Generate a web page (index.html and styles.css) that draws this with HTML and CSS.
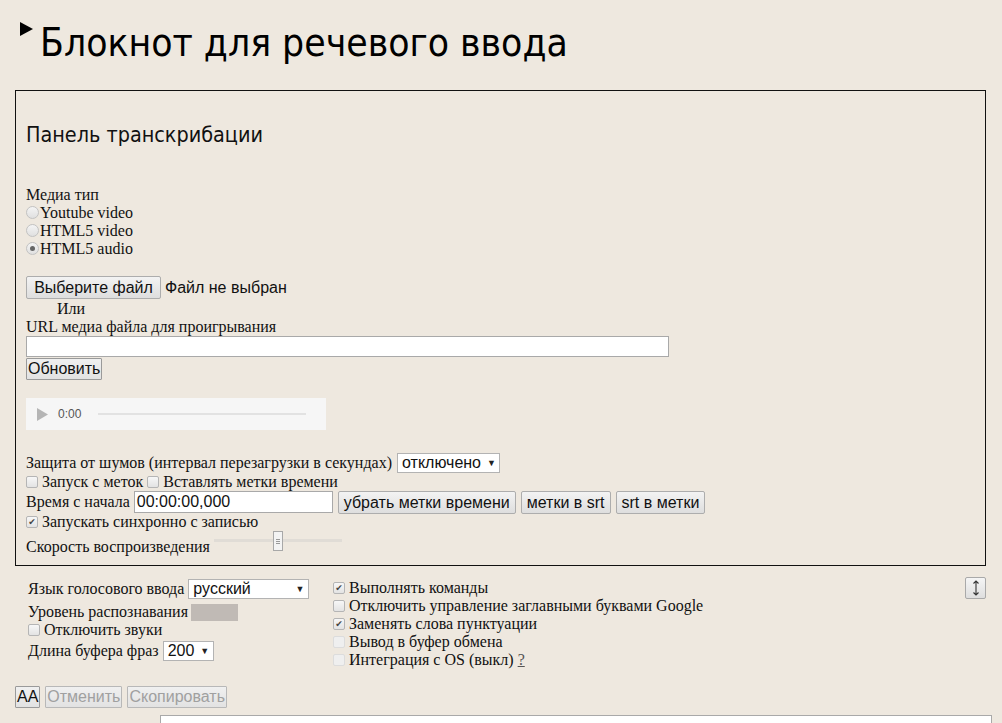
FILE: index.html
```html
<!DOCTYPE html>
<html lang="ru">
<head>
<meta charset="utf-8">
<title>Блокнот для речевого ввода</title>
<link rel="stylesheet" href="styles.css">
</head>
<body>
<header class="title-row">
  <svg class="disclosure" width="13" height="14" viewBox="0 0 13 14"><polygon points="0,0 13,7 0,14" fill="#000"/></svg>
  <h1 class="title">Блокнот для речевого ввода</h1>
</header>

<section class="panel">
  <h2 class="panel-title">Панель транскрибации</h2>
  <div class="media-type">
    <div class="line">Медиа тип</div>
    <div class="line"><span class="radio"></span>Youtube video</div>
    <div class="line"><span class="radio"></span>HTML5 video</div>
    <div class="line"><span class="radio checked"></span>HTML5 audio</div>
  </div>
  <div class="file-row">
    <span class="btn btn-grad file-btn">Выберите файл</span><span class="file-status">Файл не выбран</span>
  </div>
  <div class="line or">Или</div>
  <div class="line">URL медиа файла для проигрывания</div>
  <div class="url-input"></div>
  <div class="refresh-row"><span class="btn btn-plain">Обновить</span></div>

  <div class="audio">
    <svg class="play" width="11" height="13" viewBox="0 0 11 13"><polygon points="0,0 11,6.5 0,13" fill="#b5b5b5"/></svg>
    <span class="time">0:00</span>
    <span class="track"></span>
  </div>

  <div class="row noise-row">
    <span>Защита от шумов (интервал перезагрузки в секундах)</span>
    <span class="select noise-select">отключено <span class="arrow">▼</span></span>
  </div>
  <div class="line">
    <span class="check"></span> Запуск с меток <span class="check"></span> Вставлять метки времени
  </div>
  <div class="row time-row">
    <span>Время с начала</span>
    <span class="time-input">00:00:00,000</span>
    <span class="btn btn-grad">убрать метки времени</span>
    <span class="btn btn-grad">метки в srt</span>
    <span class="btn btn-grad">srt в метки</span>
  </div>
  <div class="line"><span class="check checked">✔</span> Запускать синхронно с записью</div>
  <div class="row speed-row">
    <span class="speed-label">Скорость воспроизведения</span>
    <span class="slider"><span class="slider-track"></span><span class="slider-thumb"></span></span>
  </div>
</section>

<section class="settings">
  <div class="settings-left">
    <div class="row set-row">
      <span>Язык голосового ввода</span>
      <span class="select lang-select">русский <span class="arrow">▼</span></span>
    </div>
    <div class="row level-row">
      <span>Уровень распознавания</span>
      <span class="level-bar"></span>
    </div>
    <div class="line mute"><span class="check"></span> Отключить звуки</div>
    <div class="row set-row buf-row">
      <span>Длина буфера фраз</span>
      <span class="select buf-select">200 <span class="arrow">▼</span></span>
    </div>
  </div>
  <div class="settings-right">
    <div class="line"><span class="check checked">✔</span> Выполнять команды</div>
    <div class="line"><span class="check"></span> Отключить управление заглавными буквами Google</div>
    <div class="line"><span class="check checked">✔</span> Заменять слова пунктуации</div>
    <div class="line"><span class="check disabled"></span> Вывод в буфер обмена</div>
    <div class="line"><span class="check disabled"></span> Интеграция с OS (выкл) <span class="help">?</span></div>
  </div>
  <div class="resize-btn">
    <svg width="8" height="16" viewBox="0 0 8 16"><path d="M4 1 V15 M1.5 3.5 L4 1 L6.5 3.5 M1.5 12.5 L4 15 L6.5 12.5" stroke="#333" stroke-width="1.1" fill="none"/></svg>
  </div>
</section>

<div class="actions">
  <span class="btn btn-plain aa">AA</span>
  <span class="btn btn-plain disabled">Отменить</span>
  <span class="btn btn-plain disabled">Скопировать</span>
</div>
<div class="editor-row"><div class="editor"></div></div>
</body>
</html>
```

FILE: styles.css
```css
html, body {
  margin: 0;
  padding: 0;
  background: #eee8df;
  color: #111;
  font-family: "Liberation Serif", "Times New Roman", serif;
  font-size: 16px;
  overflow: hidden;
  height: 723px;
}

.title-row {
  display: flex;
  align-items: flex-start;
  padding: 22px 0 0 20px;
  height: 68px;
  box-sizing: border-box;
}
.disclosure { flex: none; margin-right: 7px; }
.title {
  margin: 0;
  font-family: "DejaVu Sans Condensed", "DejaVu Sans", sans-serif;
  font-weight: normal;
  font-size: 38.7px;
  line-height: 46px;
  margin-top: -2px;
  color: #000;
}

.panel {
  margin: 22px 0 0 15px;
  width: 971px;
  height: 476px;
  box-sizing: border-box;
  border: 1px solid #111;
  padding: 0 10px;
}
.panel-title {
  margin: 32px 0 0;
  font-family: "DejaVu Sans Condensed", "DejaVu Sans", sans-serif;
  font-weight: normal;
  font-size: 21.4px;
  line-height: 24px;
}
.media-type { margin-top: 39px; }
.line {
  height: 18px;
  line-height: 18px;
  white-space: nowrap;
}
.radio {
  display: inline-block;
  width: 11px;
  height: 11px;
  border: 1px solid #c2c2c2;
  border-radius: 50%;
  background: linear-gradient(#f4f4f4, #e0e0e0);
  margin-right: 1px;
  vertical-align: -1px;
  position: relative;
}
.radio.checked::after {
  content: "";
  position: absolute;
  left: 3px; top: 3px;
  width: 5px; height: 5px;
  border-radius: 50%;
  background: #666;
}

.btn {
  display: inline-block;
  box-sizing: border-box;
  font-family: "Liberation Sans", Arial, sans-serif;
  font-size: 16px;
  color: #111;
  white-space: nowrap;
}
.btn-grad {
  height: 23px;
  line-height: 21px;
  padding: 0 5px;
  border: 1px solid #adadad;
  border-radius: 2px;
  background: linear-gradient(#f3f3f3, #dedede);
}
.btn-plain {
  height: 22px;
  line-height: 20px;
  padding: 0 1px;
  border: 1px solid #9a9a9a;
  border-radius: 1px;
  background: linear-gradient(#f0f0f0, #e2e2e2);
}
.btn.disabled { color: #a0a0a0; border-color: #b8b8b8; }

.file-row {
  margin-top: 18px;
  display: flex;
  align-items: center;
  height: 23px;
}
.file-btn { width: 135px; text-align: center; padding: 0; }
.file-status {
  font-family: "Liberation Sans", Arial, sans-serif;
  font-size: 16px;
  margin-left: 4px;
}
.or { padding-left: 31px; margin-top: 1px; }
.url-input {
  width: 643px;
  height: 21px;
  box-sizing: border-box;
  background: #fff;
  border: 1px solid #a9a9a9;
}
.refresh-row { margin-top: 1px; height: 22px; }

.audio {
  margin-top: 18px;
  width: 300px;
  height: 32px;
  background: #f6f6f6;
  display: flex;
  align-items: center;
  box-sizing: border-box;
  padding-left: 11px;
}
.play { flex: none; }
.time {
  font-family: "Liberation Sans", Arial, sans-serif;
  font-size: 12px;
  color: #555;
  margin-left: 10px;
}
.track {
  margin-left: 17px;
  width: 208px;
  height: 2px;
  background: #e2e2e2;
}

.row {
  display: flex;
  align-items: center;
  white-space: nowrap;
}
.noise-row { margin-top: 23px; height: 20px; }
.select {
  display: inline-flex;
  align-items: center;
  box-sizing: border-box;
  height: 20px;
  background: #fff;
  border: 1px solid #b3b3b3;
  font-family: "Liberation Sans", Arial, sans-serif;
  font-size: 16px;
  padding: 0 4px;
  justify-content: space-between;
}
.arrow { font-size: 9px; margin-left: 6px; color: #222; }
.noise-select { width: 103px; margin-left: 5px; }

.check {
  display: inline-block;
  box-sizing: border-box;
  width: 12px;
  height: 12px;
  border: 1px solid #b5b5b5;
  border-radius: 2px;
  background: linear-gradient(#f7f7f7, #e3e3e3);
  vertical-align: -1px;
  font-family: "DejaVu Sans", sans-serif;
  font-size: 9px;
  line-height: 10px;
  text-align: center;
  color: #444;
  overflow: hidden;
}
.check.disabled { border-color: #dcdcdc; background: #efefef; }

.time-row { height: 22px; }
.time-input {
  display: inline-block;
  box-sizing: border-box;
  width: 199px;
  height: 22px;
  line-height: 20px;
  margin-left: 4px;
  padding-left: 2px;
  background: #fff;
  border: 1px solid #a9a9a9;
  font-family: "Liberation Sans", Arial, sans-serif;
  font-size: 16px;
}
.time-row .btn { margin-left: 5px; }

.speed-row { height: 25px; align-items: flex-end; }
.speed-label { line-height: 18px; }
.slider {
  position: relative;
  width: 128px;
  height: 20px;
  margin-left: 4px;
  align-self: flex-start;
}
.slider-track {
  position: absolute;
  left: 0; right: 0; top: 8px;
  height: 3px;
  background: #e0dcd6;
}
.slider-thumb {
  position: absolute;
  left: 59px; top: 0;
  width: 10px; height: 20px;
  box-sizing: border-box;
  border: 1px solid #a8a8a8;
  background: linear-gradient(#999,#999) 2px 7px / 4px 1px no-repeat,
              linear-gradient(#999,#999) 2px 9px / 4px 1px no-repeat,
              linear-gradient(#999,#999) 2px 11px / 4px 1px no-repeat,
              #f3f3f3;
}

.settings {
  display: flex;
  padding: 13px 0 0 28px;
  height: 120px;
  box-sizing: border-box;
}
.settings-left { width: 305px; }
.set-row { height: 20px; }
.lang-select { width: 121px; margin-left: 4px; }
.level-row { height: 18px; margin-top: 4px; }
.level-bar {
  display: inline-block;
  width: 47px;
  height: 17px;
  background: #c0bab5;
  margin-left: 3px;
}
.mute { height: 19px; }
.buf-row { margin-top: 1px; }
.buf-select { width: 51px; margin-left: 4px; }
.settings-right { flex: 1; }
.help { text-decoration: underline; color: #555; }
.resize-btn {
  width: 21px;
  height: 22px;
  box-sizing: border-box;
  border: 1px solid #a9a9a9;
  border-radius: 2px;
  background: linear-gradient(#f5f5f5, #dedede);
  display: flex;
  align-items: center;
  justify-content: center;
  margin-right: 16px;
  margin-top: -2px;
}

.actions {
  display: flex;
  gap: 5px;
  padding-left: 15px;
  height: 23px;
}
.aa { padding: 0 1px; }
.editor-row { padding-left: 160px; margin-top: 6px; }
.editor {
  width: 830px;
  height: 40px;
  background: #fff;
  border: 1px solid #a9a9a9;
}
```
